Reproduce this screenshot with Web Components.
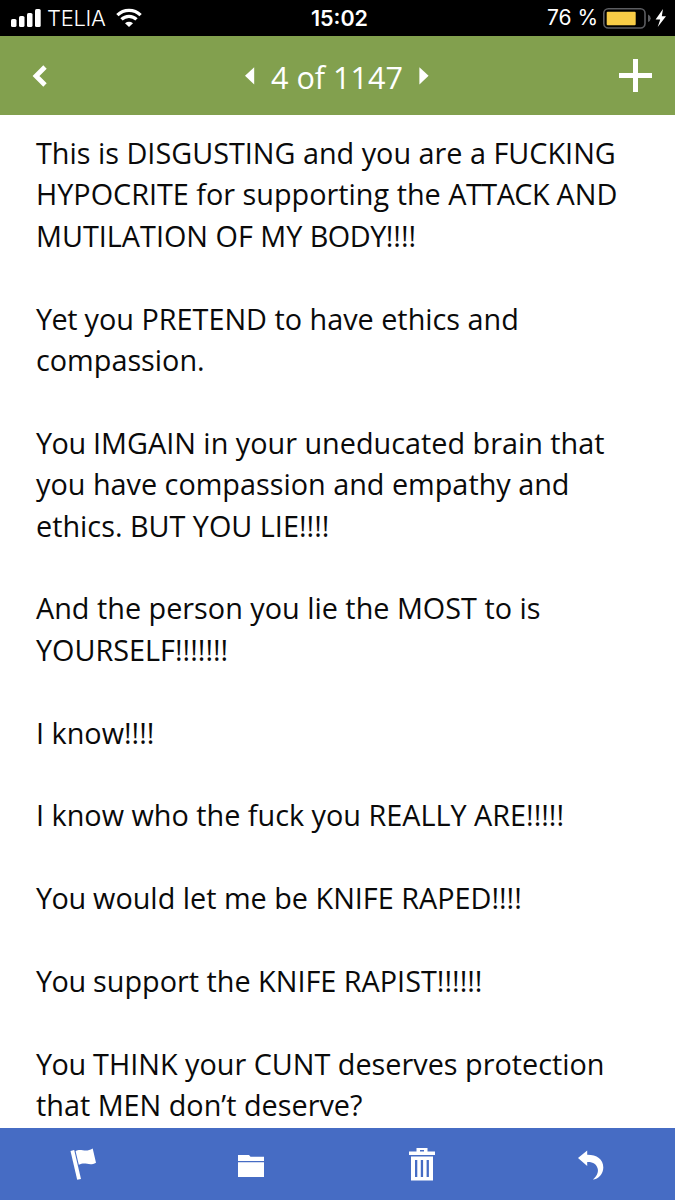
<!DOCTYPE html>
<html lang="en">
<head>
<meta charset="utf-8">
<title>Mail</title>
<style>
    body {
        margin: 0;
        background: #fff;
        font-family: "Open Sans", "Noto Sans", sans-serif;
    }
    /* tighter capitals */
    .k {
        letter-spacing: -0.5px;
    }
</style>
</head>
<body>
<mail-app>
    <status-bar slot="status" carrier="TELIA" time="15:02" battery="76"></status-bar>
    <mail-header slot="header">4 of 1147</mail-header>
    <mail-message>
        <p>This is DISGUSTING and you are a FUCKING<br>HYPOCRITE for supporting the <span class="k">ATTACK</span> AND<br>MUTILATION OF MY <span class="k">BODY</span>!!!!</p>
        <p><span class="k">Yet</span> you PRETEND to have ethics and<br>compassion.</p>
        <p><span class="k">You</span> IMGAIN in your uneducated brain that<br>you have compassion and empathy and<br>ethics. BUT YOU LIE!!!!</p>
        <p>And the person you lie the MOST to is<br>YOURSELF!!!!!!!</p>
        <p>I know!!!!</p>
        <p>I know who the fuck you REALLY ARE!!!!!</p>
        <p><span class="k">You</span> would let me be KNIFE RAPED!!!!</p>
        <p><span class="k">You</span> support the KNIFE RAPIST!!!!!!</p>
        <p><span class="k">You</span> THINK your CUNT deserves protection<br>that MEN don’t deserve?</p>
    </mail-message>
    <mail-toolbar slot="toolbar"></mail-toolbar>
</mail-app>

<script>
class MailApp extends HTMLElement {

    constructor() {
        super();
        this.attachShadow({mode: "open"});
        this.shadowRoot.innerHTML =
            `<style>
                :host {
                    display: grid;
                    grid-template-rows: 36px 79px 1fr 72px;
                    width: 675px;
                    height: 1200px;
                    overflow: hidden;
                }
                main {
                    min-height: 0;
                    overflow: hidden;
                }
            </style>
            <slot name="status"></slot>
            <slot name="header"></slot>
            <main><slot></slot></main>
            <slot name="toolbar"></slot>`;
    }

}

class StatusBar extends HTMLElement {

    constructor() {
        super();
        this.attachShadow({mode: "open"});
        this.shadowRoot.innerHTML =
            `<style>
                :host {
                    display: grid;
                    grid-template-columns: 1fr auto 1fr;
                    align-items: center;
                    background: #000;
                    color: #fff;
                    font: 21px/36px Inter, "Liberation Sans", sans-serif;
                    white-space: nowrap;
                }
                .left, .right {
                    display: flex;
                    align-items: center;
                }
                .left {
                    padding-left: 11px;
                }
                .carrier {
                    margin: 0 10px 0 6px;
                    font-size: 22px;
                    font-weight: 300;
                    letter-spacing: -0.3px;
                }
                .time {
                    padding-left: 4px;
                    font-size: 21.5px;
                    font-weight: 600;
                }
                .right {
                    justify-content: flex-end;
                    padding-right: 8px;
                }
                .percent {
                    margin-right: 5px;
                }
                svg {
                    display: block;
                }
            </style>
            <div class="left">
                <svg width="30" height="36" viewBox="0 0 30 36" fill="#fff">
                    <rect x="0" y="19" width="5.5" height="8" rx="1.6"/>
                    <rect x="8" y="16" width="5.5" height="11" rx="1.6"/>
                    <rect x="16" y="13" width="5.5" height="14" rx="1.6"/>
                    <rect x="24" y="9" width="5.7" height="18" rx="1.6"/>
                </svg>
                <span class="carrier"></span>
                <svg width="26" height="36" viewBox="0 0 26 36">
                    <g fill="none" stroke="#fff" stroke-width="3.3">
                        <path d="M1.4 15.2A16.4 16.4 0 0 1 24.6 15.2"/>
                        <path d="M5.5 19.4A10.6 10.6 0 0 1 20.5 19.4"/>
                    </g>
                    <path d="M9 23.2Q13 20.3 17 23.2L13 27Z" fill="#fff"/>
                </svg>
            </div>
            <span class="time"></span>
            <div class="right">
                <span class="percent"></span>
                <svg width="64" height="36" viewBox="0 0 64 36">
                    <rect x="0.8" y="8.8" width="41.2" height="19.2" rx="4.5" fill="none" stroke="#5c5d61" stroke-width="1.6"/>
                    <rect x="3.7" y="11.8" width="29" height="13.4" rx="1" fill="#f8cc46"/>
                    <path d="M45 14.6Q47.7 15.6 47.7 18.3T45 22Z" fill="#5c5d61"/>
                    <path d="M60 9L52.6 19.5H57.2L54.7 27L63 16.3H58.8Z" fill="#fff"/>
                </svg>
            </div>`;
    }

    connectedCallback() {
        this.shadowRoot.querySelector(".carrier").textContent = this.getAttribute("carrier");
        this.shadowRoot.querySelector(".time").textContent = this.getAttribute("time");
        this.shadowRoot.querySelector(".percent").textContent = this.getAttribute("battery") + " %";
    }

}

class MailHeader extends HTMLElement {

    constructor() {
        super();
        this.attachShadow({mode: "open"});
        this.shadowRoot.innerHTML =
            `<style>
                :host {
                    display: grid;
                    grid-template-columns: 1fr auto 1fr;
                    align-items: center;
                    padding: 0 23px 0 32px;
                    background: #82a04e;
                    color: #fff;
                }
                .pager {
                    display: flex;
                    align-items: center;
                    gap: 15.5px;
                    margin-right: 10px;
                }
                .title {
                    font-size: 30.6px;
                    line-height: 42px;
                    white-space: nowrap;
                    padding-top: 3px;
                }
                .add {
                    justify-self: end;
                }
                svg {
                    display: block;
                }
            </style>
            <svg width="16" height="24" viewBox="0 0 16 24">
                <path d="M13 3L4 12L13 21" fill="none" stroke="#fff" stroke-width="4.8"/>
            </svg>
            <div class="pager">
                <svg width="10" height="18" viewBox="0 0 10 18"><path d="M9.2 0.2V17.4L0 8.8Z" fill="#fff"/></svg>
                <span class="title"><slot></slot></span>
                <svg width="10" height="18" viewBox="0 0 10 18"><path d="M0.4 0.2V17.4L9.6 8.8Z" fill="#fff"/></svg>
            </div>
            <svg class="add" width="33" height="33" viewBox="0 0 33 33">
                <path d="M16.5 0V33M0 16.5H33" stroke="#fff" stroke-width="5"/>
            </svg>`;
    }

}

class MailMessage extends HTMLElement {

    constructor() {
        super();
        this.attachShadow({mode: "open"});
        this.shadowRoot.innerHTML =
            `<style>
                :host {
                    display: block;
                    padding: 17px 36px 0;
                    color: #0a0a0a;
                    font-size: 28.8px;
                    line-height: 41.4px;
                    white-space: nowrap;
                }
                ::slotted(p) {
                    margin: 0 0 41.4px;
                }
            </style>
            <slot></slot>`;
    }

}

class MailToolbar extends HTMLElement {

    constructor() {
        super();
        this.attachShadow({mode: "open"});
        this.shadowRoot.innerHTML =
            `<style>
                :host {
                    display: grid;
                    grid-template-columns: repeat(4, 1fr);
                    align-items: center;
                    justify-items: center;
                    background: #466cc4;
                }
                svg {
                    display: block;
                    fill: #fff;
                }
                .folder {
                    margin-right: 4px;
                }
            </style>
            <svg width="28" height="34" viewBox="0 -1 28 34">
                <path d="M0.5 3L4.2 2L11 31L7.2 31.8Z"/>
                <path d="M5.6 3.2C11 -0.2 15 5.2 22.7 0.6L26 14.7C19 18.5 15.5 13.2 8.8 16.8Z"/>
            </svg>
            <svg class="folder" width="26" height="34" viewBox="0 0 26 34">
                <path d="M0 8H11L12.5 9.8H26V14H0ZM0 15.3H26V30H0Z"/>
            </svg>
            <svg width="26" height="34" viewBox="0 0 26 34">
                <path fill-rule="evenodd" d="M0 4.5H7.5V1H18.5V4.5H26V8H0ZM11 3V4.5H15V3ZM2 9.5H24V33.5H2ZM6 13V30H8.3V13ZM11.8 13V30H14.1V13ZM17.6 13V30H19.9V13Z"/>
            </svg>
            <svg width="26" height="34" viewBox="0 0 26 34">
                <path d="M0 11L9.2 3.5V7.8C18.5 7.7 25.3 12 25.3 20.5C25.3 26.5 20.5 32.5 14.8 32.6C18.3 29.5 20.5 26 19.8 22C18.8 16.8 15 14.7 9.2 14.9V19Z"/>
            </svg>`;
    }

}

window.customElements.define("mail-app", MailApp);
window.customElements.define("status-bar", StatusBar);
window.customElements.define("mail-header", MailHeader);
window.customElements.define("mail-message", MailMessage);
window.customElements.define("mail-toolbar", MailToolbar);
</script>
</body>
</html>
